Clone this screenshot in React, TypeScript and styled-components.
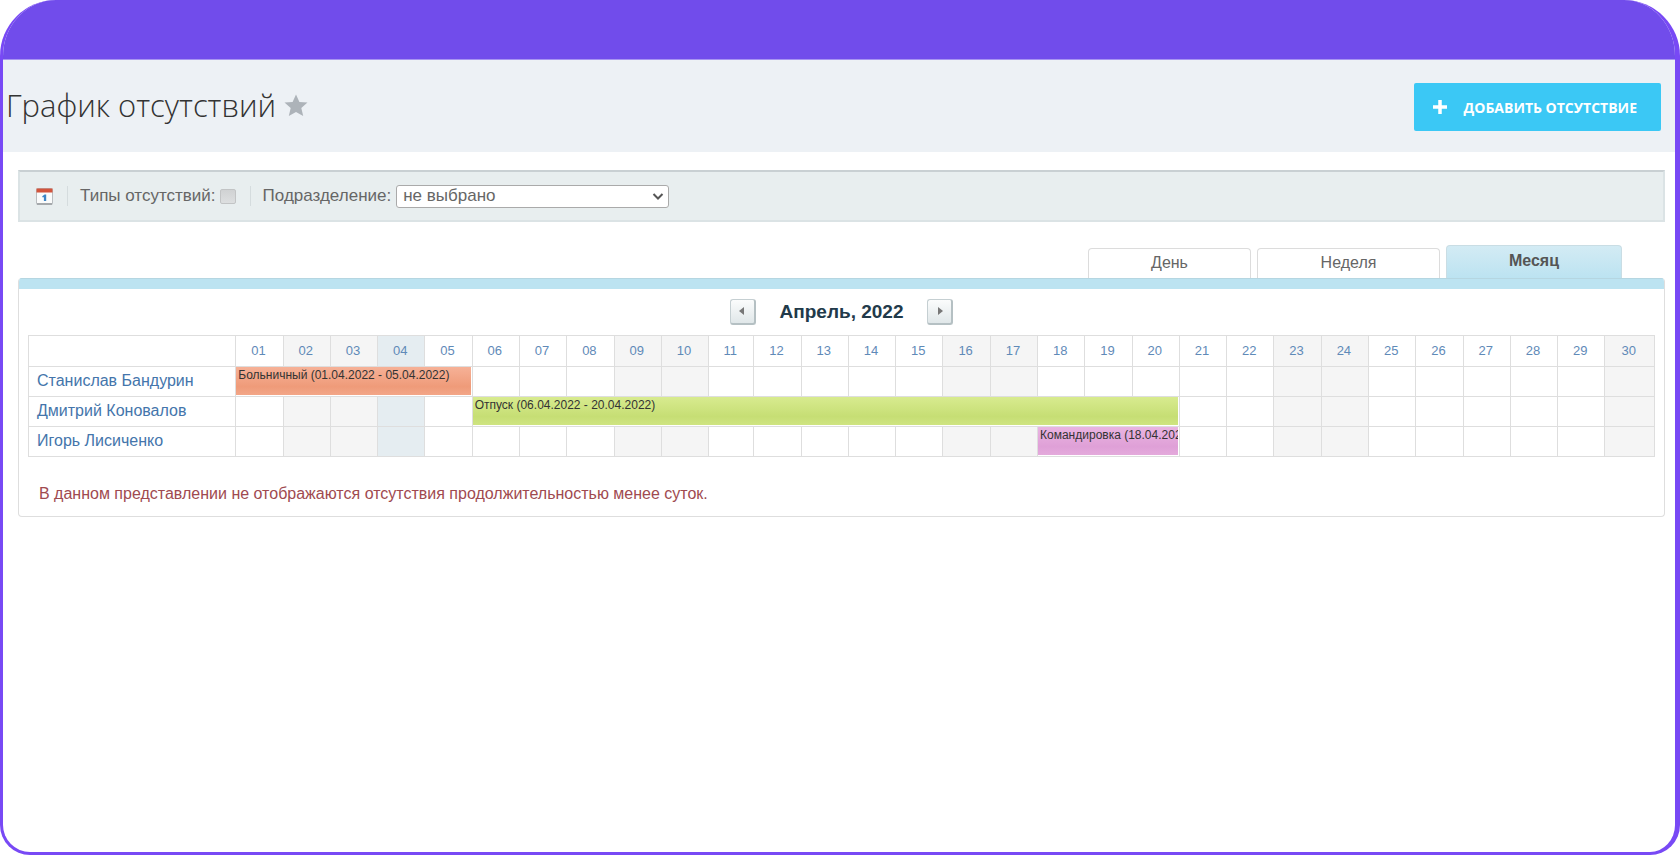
import React from "react";
import styled, { createGlobalStyle, css } from "styled-components";

const GlobalStyle = createGlobalStyle`
  *, *::before, *::after { box-sizing: border-box; }
  body {
    margin: 0;
    background: #fff;
    font-family: "Liberation Sans", Arial, sans-serif;
    font-size: 16px;
    color: #666;
  }
  button, select, input { font: inherit; color: inherit; margin: 0; }
`;

const Frame = styled.div`
  min-height: 100vh;
  border: solid #7849f5;
  border-width: 0 5px 3px 3px;
  border-radius: 56px 56px 30px 30px;
  overflow: hidden;
  background: #fff;
`;

const TopBand = styled.div`
  height: 60px;
  background: #714ceb;
  border-bottom: 1px solid #a794f1;
`;

const Header = styled.header`
  display: flex;
  align-items: center;
  justify-content: space-between;
  height: 92px;
  padding: 2px 14px 0 3px;
  background: #edf1f5;
`;

const TitleGroup = styled.div`
  display: flex;
  align-items: center;
  gap: 7px;
  padding-bottom: 4px;
`;

const Title = styled.h1`
  margin: 0;
  font-family: "Open Sans", sans-serif;
  font-size: 31px;
  line-height: 44px;
  font-weight: 300;
  color: #333;
`;

const StarButton = styled.button`
  display: flex;
  padding: 0;
  border: 0;
  background: none;
`;

const AddButton = styled.button`
  display: flex;
  align-items: center;
  gap: 17px;
  height: 48px;
  padding: 0 24px 0 19px;
  border: 0;
  border-radius: 2px;
  background: #3bc8f5;
  color: #fff;
  font-family: "Open Sans", sans-serif;
  font-size: 14px;
  font-weight: 700;
  text-transform: uppercase;
  white-space: nowrap;
`;

const Content = styled.main`
  padding: 18px 10px 24px 15px;
`;

const FilterBar = styled.form`
  display: flex;
  align-items: center;
  height: 52px;
  padding: 0 16px;
  background: #e8eeef;
  border: 2px solid #dbe3e5;
  border-top-color: #c9d0d3;
  font-size: 17px;
`;

const CalendarButton = styled.button`
  display: flex;
  padding: 0;
  border: 0;
  background: none;
`;

const Separator = styled.span`
  width: 1px;
  height: 20px;
  margin: 0 12px 0 14px;
  background: #d5dcde;
`;

const FilterLabel = styled.label`
  line-height: 20px;
  white-space: nowrap;
`;

const Checkbox = styled.input`
  appearance: none;
  width: 16px;
  height: 15px;
  margin-left: 4px;
  border: 1px solid #c2c4c5;
  border-radius: 2px;
  background: linear-gradient(#d0d2d3, #dddfe0);
`;

const SelectWrap = styled.div`
  position: relative;
  display: flex;
  margin-left: 5px;
`;

const Select = styled.select`
  appearance: none;
  width: 273px;
  height: 23px;
  padding: 0 28px 0 6px;
  border: 1px solid #aaa;
  border-radius: 3px;
  background: #fff;
  line-height: 20px;
`;

const SelectArrow = styled.svg`
  position: absolute;
  right: 5px;
  top: 7px;
  pointer-events: none;
`;

const Tabs = styled.div`
  display: flex;
  align-items: flex-end;
  justify-content: flex-end;
  gap: 6px;
  height: 56px;
  padding-right: 43px;
`;

const Tab = styled.button<{ $width: number; $active?: boolean }>`
  width: ${(p) => p.$width}px;
  height: 30px;
  padding: 0 0 2px;
  border: 1px solid #dcdcdc;
  border-bottom: 0;
  border-radius: 4px 4px 0 0;
  background: #fff;
  ${(p) =>
    p.$active &&
    css`
      height: 33px;
      border-color: #c9dde4;
      background: linear-gradient(#d3ebf4, #bce3f1);
      font-weight: 700;
      color: #555;
    `}
`;

const Panel = styled.section`
  border: 1px solid #dedede;
  border-top: 0;
  border-radius: 4px;
  overflow: hidden;
`;

const PanelBand = styled.div`
  height: 11px;
  background: #bce3f1;
  border-top: 1px solid #b5d6e1;
`;

const MonthNav = styled.div`
  display: flex;
  align-items: center;
  justify-content: center;
  gap: 24px;
  height: 46px;
  padding-bottom: 1px;
`;

const MonthTitle = styled.h2`
  margin: 0;
  font-size: 19px;
  line-height: 24px;
  font-weight: 700;
  color: #223a4a;
`;

const NavButton = styled.button`
  display: flex;
  align-items: center;
  justify-content: center;
  width: 26px;
  height: 26px;
  padding: 0;
  border: 1px solid #c5cfd2;
  border-right: 2px solid #b5c0c3;
  border-bottom: 2px solid #b5c0c3;
  border-radius: 3px;
  background: linear-gradient(#fbfcfc, #e0e7e9);
`;

const TableWrap = styled.div`
  padding: 0 9px;
`;

const Table = styled.table`
  width: 100%;
  table-layout: fixed;
  border-collapse: separate;
  border-spacing: 0;
  border: solid #dedede;
  border-width: 0 1px 1px 0;
`;

type Tone = "plain" | "weekend" | "today";
const tones: Record<Tone, string> = {
  plain: "#fff",
  weekend: "#f5f5f5",
  today: "#e5edf1",
};

const cell = css`
  padding: 0;
  border: solid #dedede;
  border-width: 1px 0 0 1px;
`;

const DayHead = styled.th<{ $tone: Tone }>`
  ${cell}
  height: 31px;
  padding: 0 2px 2px 0;
  background: ${(p) => tones[p.$tone]};
  font-size: 13px;
  font-weight: 400;
`;

const DayLink = styled.a`
  color: #5f8ab8;
  text-decoration: none;
`;

const NameHead = styled.th`
  ${cell}
  padding: 0 0 2px 8px;
  text-align: left;
  font-weight: 400;
  white-space: nowrap;
`;

const NameLink = styled.a`
  color: #4475ab;
  text-decoration: none;
`;

const DayCell = styled.td<{ $tone: Tone }>`
  ${cell}
  height: 30px;
  background: ${(p) => tones[p.$tone]};
`;

const EventCell = styled.td`
  ${cell}
  height: 30px;
  vertical-align: top;
`;

const EventBar = styled.div<{ $from: string; $to: string }>`
  height: 28px;
  margin-right: 1px;
  padding-left: 2px;
  overflow: hidden;
  background: linear-gradient(${(p) => p.$from}, ${(p) => p.$to} 70%, ${(p) => p.$from} 130%);
  color: #333;
  font-size: 12px;
  line-height: 16px;
  white-space: nowrap;
`;

const Notice = styled.p`
  margin: 0;
  padding: 27px 20px 12px;
  line-height: 20px;
  color: #a04a50;
`;

interface Absence {
  start: number;
  end: number;
  label: string;
  from: string;
  to: string;
}

const people: { name: string; absence: Absence }[] = [
  {
    name: "Станислав Бандурин",
    absence: { start: 1, end: 5, label: "Больничный (01.04.2022 - 05.04.2022)", from: "#f6b197", to: "#ef9b79" },
  },
  {
    name: "Дмитрий Коновалов",
    absence: { start: 6, end: 20, label: "Отпуск (06.04.2022 - 20.04.2022)", from: "#d8eb8f", to: "#c6de74" },
  },
  {
    name: "Игорь Лисиченко",
    absence: { start: 18, end: 20, label: "Командировка (18.04.2022 - 20.04.2022)", from: "#e9b4e1", to: "#dfa0d7" },
  },
];

const days = Array.from({ length: 30 }, (_, i) => i + 1);

const toneOf = (day: number): Tone => {
  if (day === 4) return "today";
  return [2, 3, 9, 10, 16, 17, 23, 24, 30].includes(day) ? "weekend" : "plain";
};

const colWidth = (day: number) => (day === 11 ? 45 : day === 30 ? 49 : 47);

const Col = styled.col<{ $width: number }>`
  width: ${(p) => p.$width}px;
`;

function PersonRow({ name, absence }: { name: string; absence: Absence }) {
  return (
    <tr>
      <NameHead scope="row">
        <NameLink href="#">{name}</NameLink>
      </NameHead>
      {days.map((day) => {
        if (day === absence.start) {
          return (
            <EventCell key={day} colSpan={absence.end - absence.start + 1}>
              <EventBar $from={absence.from} $to={absence.to}>
                {absence.label}
              </EventBar>
            </EventCell>
          );
        }
        if (day > absence.start && day <= absence.end) return null;
        return <DayCell key={day} $tone={toneOf(day)} />;
      })}
    </tr>
  );
}

export default function App() {
  return (
    <>
      <GlobalStyle />
      <Frame>
        <TopBand />
        <Header>
          <TitleGroup>
            <Title>График отсутствий</Title>
            <StarButton type="button" aria-label="В избранное">
              <svg width="26" height="26" viewBox="0 0 26 26" aria-hidden="true">
                <path
                  d="M13 2.500l3.400 7.400 8.100.6-6.200 5.400 1.900 8.100-7.200-4.100-7.200 4.100 1.900-8.100L1.500 10.500l8.100-.6z"
                  fill="#adb3b9"
                />
              </svg>
            </StarButton>
          </TitleGroup>
          <AddButton type="button">
            <svg width="14" height="14" viewBox="0 0 14 14" aria-hidden="true">
              <path d="M7 0v14M0 7h14" stroke="#fff" strokeWidth="3.500" />
            </svg>
            Добавить отсутствие
          </AddButton>
        </Header>
        <Content>
          <FilterBar>
            <CalendarButton type="button" aria-label="Календарь">
              <svg width="17" height="17" viewBox="0 0 17 17" aria-hidden="true">
                <rect x=".5" y=".5" width="16" height="16" rx="1" fill="#fafbfb" stroke="#b9bdc0" />
                <rect x=".5" y=".5" width="16" height="4" fill="#d2543c" />
                <path d="M6.300 8.300L8.600 6.500h1.600v6.500H7.900V9.200H6.300z" fill="#3d86c6" />
                <path d="M1 16h15" stroke="#a5a9ac" strokeWidth="2" />
              </svg>
            </CalendarButton>
            <Separator />
            <FilterLabel htmlFor="types">Типы отсутствий:</FilterLabel>
            <Checkbox id="types" type="checkbox" />
            <Separator />
            <FilterLabel htmlFor="department">Подразделение:</FilterLabel>
            <SelectWrap>
              <Select id="department">
                <option>не выбрано</option>
              </Select>
              <SelectArrow width="12" height="9" viewBox="0 0 12 9" aria-hidden="true">
                <path d="M1.500 2L6 6.500 10.500 2" fill="none" stroke="#555" strokeWidth="2" />
              </SelectArrow>
            </SelectWrap>
          </FilterBar>
          <Tabs role="tablist">
            <Tab type="button" role="tab" $width={163}>День</Tab>
            <Tab type="button" role="tab" $width={183}>Неделя</Tab>
            <Tab type="button" role="tab" aria-selected="true" $width={176} $active>Месяц</Tab>
          </Tabs>
          <Panel>
            <PanelBand />
            <MonthNav>
              <NavButton type="button" aria-label="Предыдущий месяц">
                <svg width="6" height="8" viewBox="0 0 6 8" aria-hidden="true">
                  <path d="M5 0v8L0 4z" fill="#777" />
                </svg>
              </NavButton>
              <MonthTitle>Апрель, 2022</MonthTitle>
              <NavButton type="button" aria-label="Следующий месяц">
                <svg width="6" height="8" viewBox="0 0 6 8" aria-hidden="true">
                  <path d="M1 0v8l5-4z" fill="#777" />
                </svg>
              </NavButton>
            </MonthNav>
            <TableWrap>
              <Table>
                <colgroup>
                  <Col $width={206} />
                  {days.map((day) => (
                    <Col key={day} $width={colWidth(day)} />
                  ))}
                </colgroup>
                <thead>
                  <tr>
                    <NameHead as="td" />
                    {days.map((day) => (
                      <DayHead key={day} scope="col" $tone={toneOf(day)}>
                        <DayLink href="#">{String(day).padStart(2, "0")}</DayLink>
                      </DayHead>
                    ))}
                  </tr>
                </thead>
                <tbody>
                  {people.map((person) => (
                    <PersonRow key={person.name} {...person} />
                  ))}
                </tbody>
              </Table>
            </TableWrap>
            <Notice>В данном представлении не отображаются отсутствия продолжительностью менее суток.</Notice>
          </Panel>
        </Content>
      </Frame>
    </>
  );
}
